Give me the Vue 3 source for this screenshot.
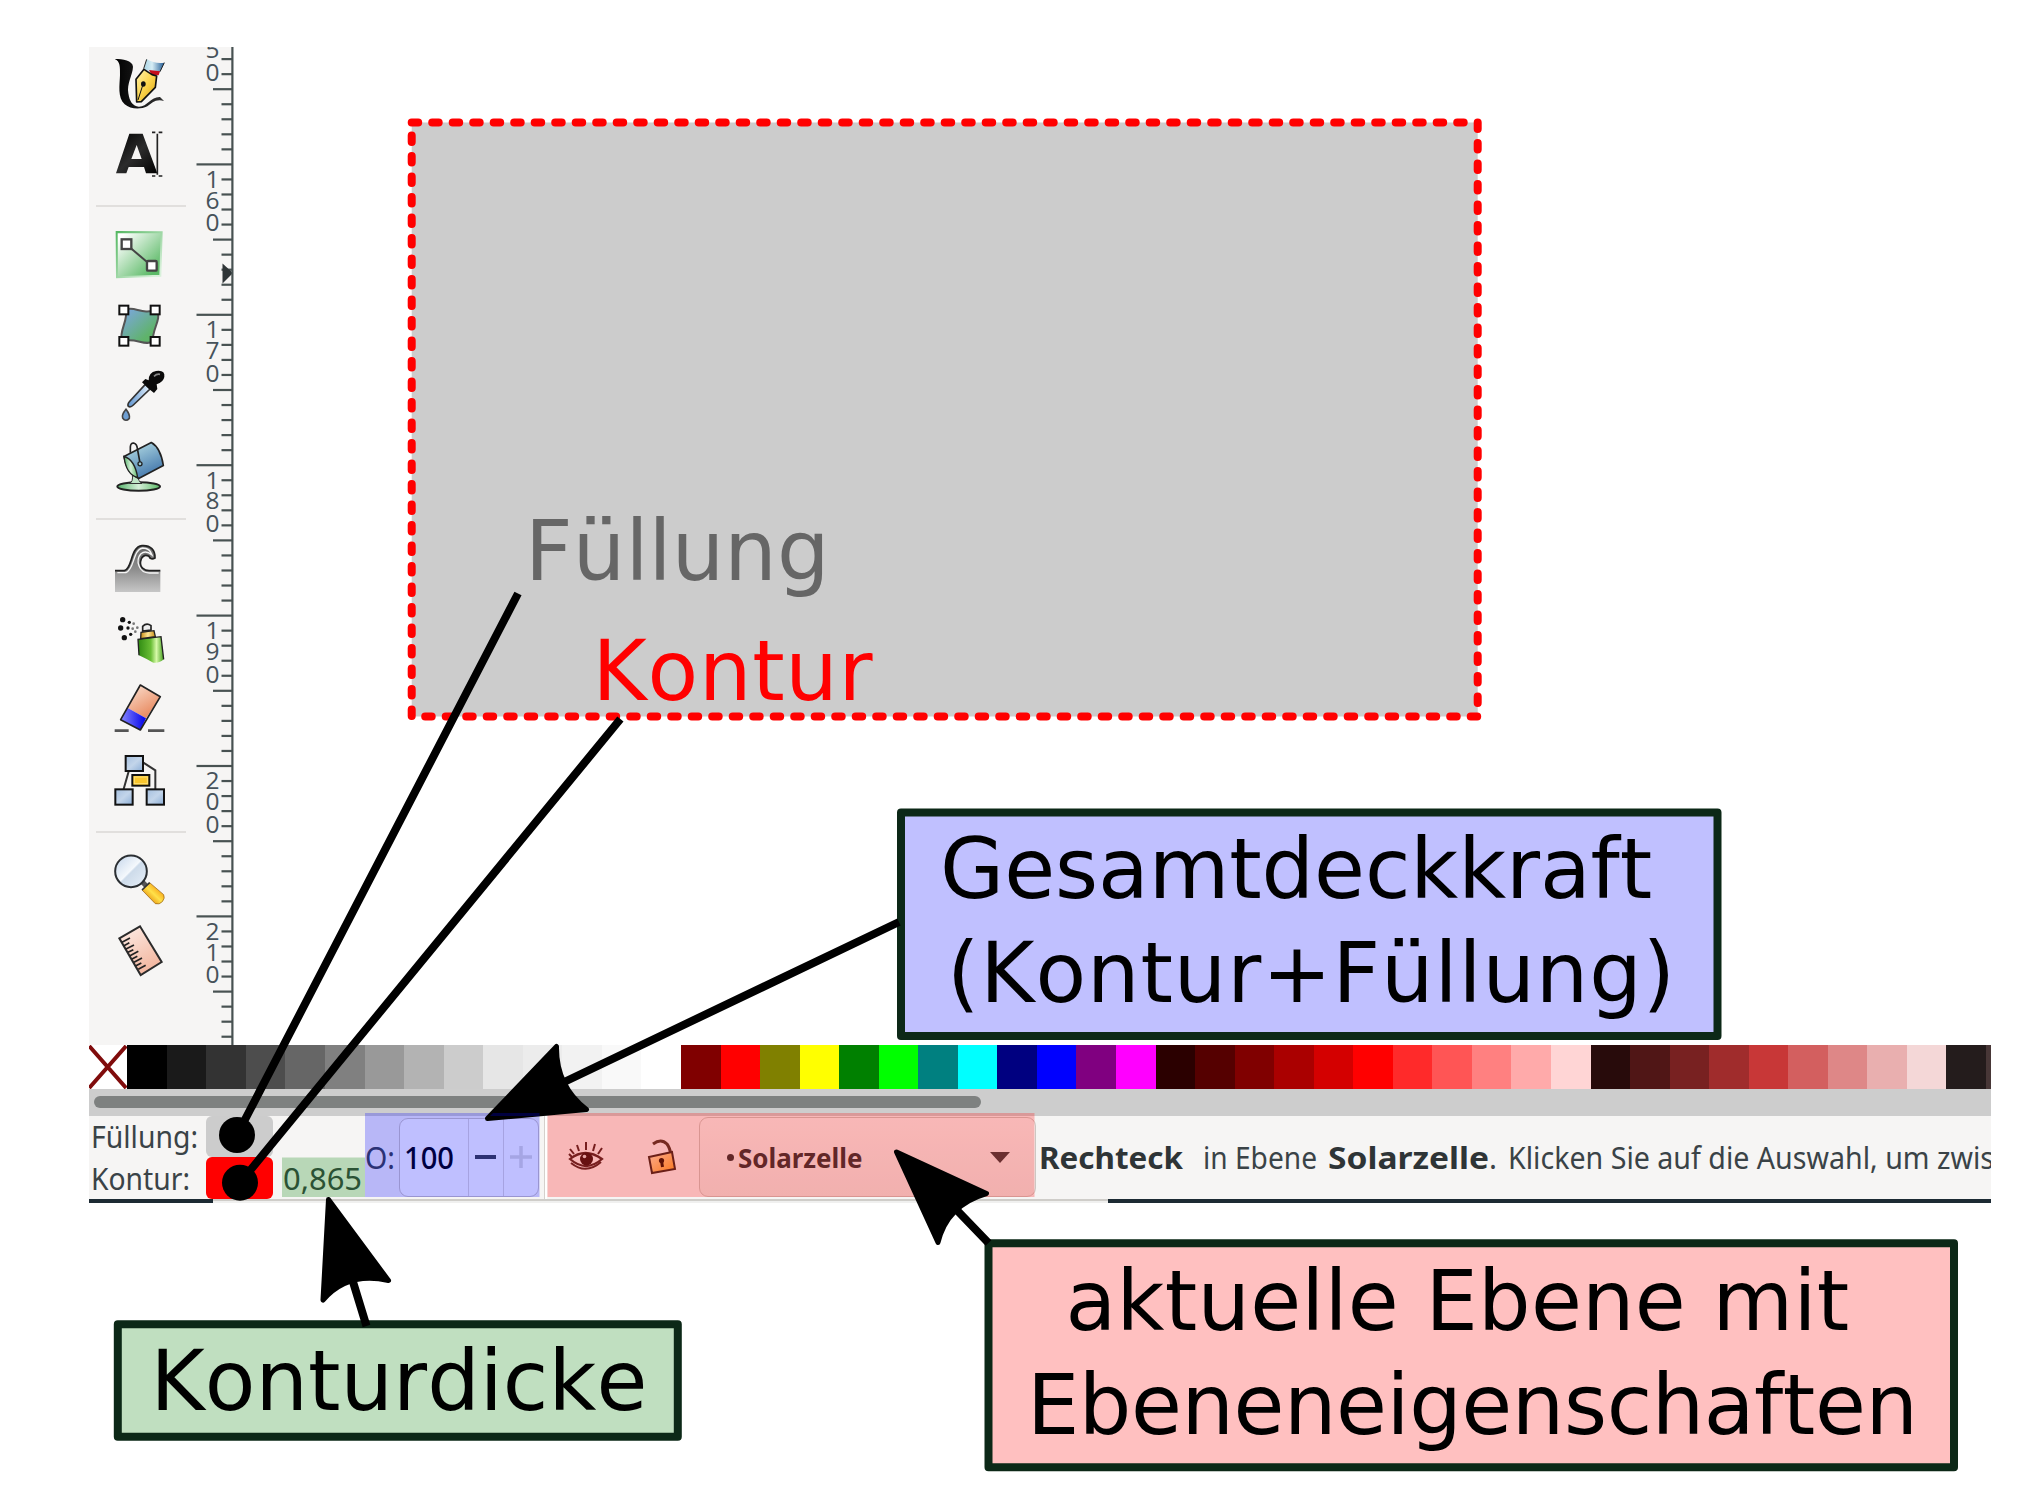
<script setup>
const palette = [
  '#000000', '#1a1a1a', '#333333', '#4d4d4d', '#666666', '#808080', '#999999', '#b3b3b3', '#cccccc', '#e6e6e6',
  '#ececec', '#f2f2f2', '#f9f9f9', '#ffffff', '#800000', '#ff0000', '#808000', '#ffff00', '#008000', '#00ff00',
  '#008080', '#00ffff', '#000080', '#0000ff', '#800080', '#ff00ff', '#2b0000', '#550000', '#800000', '#aa0000',
  '#d40000', '#ff0000', '#ff2a2a', '#ff5555', '#ff8080', '#ffaaaa', '#ffd5d5', '#280b0b', '#501616', '#782121',
  '#a02c2c', '#c83737', '#d35f5f', '#de8787', '#e9afaf', '#f4d7d7', '#241c1c', '#483737',
]

// Vertical ruler: one tick per millimetre, a label every ten
const STEP = 15.04
const ticks = []
for (let i = 3; i < 69; i++) {
  const y = 14 + i * STEP - 47
  if (y < 0 || y > 997) continue
  ticks.push({ y, x: i % 10 === 0 ? 0.5 : i % 5 === 0 ? 17 : 25.5 })
}
const digits = []
for (let n = 0; n < 7; n++) {
  String(150 + n * 10).split('').forEach((d, k) => {
    digits.push({ d, y: 13.6 + n * 10 * STEP - 47 + [23.8, 44.6, 67.3][k] })
  })
}

// Large captions; w is the advance width of the line
const captions = [
  { x: 525, y: 579.5, w: 304.5, color: '#666666', text: 'Füllung' },
  { x: 592.6, y: 699.7, w: 280, color: '#ff0000', text: 'Kontur' },
  { x: 940.1, y: 898.3, w: 712, text: 'Gesamtdeckkraft' },
  { x: 947, y: 1002.3, w: 728, text: '(Kontur+Füllung)' },
  { x: 150.4, y: 1410.2, w: 497, text: 'Konturdicke' },
  { x: 1065.6, y: 1329.5, w: 783.5, text: 'aktuelle Ebene mit' },
  { x: 1026.9, y: 1433.5, w: 891, text: 'Ebeneneigenschaften' },
]

// Stretches a label horizontally to the given width
const vFit = {
  mounted(el, { value }) {
    const w = el.getBoundingClientRect().width
    el.style.transform = `scaleX(${value / w})`
    el.style.marginRight = `${value - w}px`
  },
}
</script>

<template>
  <div class="page">
    <div class="shot">
      <div class="workspace">
        <div class="tools">
          <!-- calligraphy -->
          <svg viewBox="96 48 162 162">
            <defs>
              <linearGradient id="nib" x1="0" y1="0" x2="1" y2="1"><stop offset="0" stop-color="#fff3b0" /><stop offset=".5" stop-color="#fbd44c" /><stop offset="1" stop-color="#d9a010" /></linearGradient>
              <linearGradient id="holder"><stop offset="0" stop-color="#a9d5e6" /><stop offset=".4" stop-color="#d6edf5" /><stop offset="1" stop-color="#1f5a94" /></linearGradient>
              <linearGradient id="ink"><stop offset="0" stop-color="#000" /><stop offset="1" stop-color="#333" /></linearGradient>
            </defs>
            <path d="M104 57C128 57 158 62 159 80C158 105 140 130 145 160C149 186 158 198 176 200C202 201 212 170 240 171L252 183C226 176 216 190 202 199C180 210 150 207 134 193C112 172 119 135 120 105C120 80 121 64 104 57Z" fill="url(#ink)" />
            <path d="M200 58L192 88L214 96L240 96L253 68Q225 72 200 58Z" fill="url(#holder)" /><path d="M200 58L191 86M240 95L253 68" stroke="#222" stroke-width="3" fill="none" />
            <path d="M207 90L240 94L236 106L214 104Z" fill="#c40d1c" />
            <path d="M192 88L216 104L230 108L226 142L184 185L170 186L168 118Z" fill="url(#nib)" stroke="#111" stroke-width="5" stroke-linejoin="round" />
            <path d="M190 130L174 180" stroke="#111" stroke-width="3" /><ellipse cx="190" cy="132" rx="7" ry="8" fill="#111" />
          </svg>
          <!-- text -->
          <svg viewBox="96 262 162 162">
            <defs><linearGradient id="ta" x1="0" y1="0" x2="1" y2="1"><stop offset="0" stop-color="#000" /><stop offset=".5" stop-color="#2c2c2c" /><stop offset="1" stop-color="#000" /></linearGradient></defs>
            <path fill-rule="evenodd" d="M108 401L148 282H188L232 401H198L192 382H146L139 401ZM154 358H185L170 316Z" fill="url(#ta)" />
            <path d="M216 278H226M236 278H247M232 282V405M216 409H226M236 409H247" stroke="#222" stroke-width="5" />
          </svg>
          <div class="rule"></div>
          <!-- gradient -->
          <svg viewBox="96 560 162 162">
            <defs>
              <linearGradient id="gr" x1="0" y1="0" x2="1" y2="1"><stop offset=".1" stop-color="#fff" /><stop offset=".85" stop-color="#5cba67" /></linearGradient>
              <linearGradient id="grb" x1="0" y1="0" x2="1" y2="1"><stop offset="0" stop-color="#55b862" /><stop offset=".9" stop-color="#d8f0da" /></linearGradient>
            </defs>
            <path d="M110 575L245 576L241 706L111 711Z" fill="url(#gr)" stroke="url(#grb)" stroke-width="6" />
            <path d="M142 615L212 674" stroke="#444" stroke-width="6" />
            <rect x="125" y="597" width="29" height="29" fill="#fff" stroke="#444" stroke-width="7" />
            <rect x="201" y="662" width="29" height="29" rx="3" fill="#fff" stroke="#444" stroke-width="7" />
          </svg>
          <!-- mesh -->
          <svg viewBox="96 774 162 162">
            <defs><linearGradient id="me" x1="0" y1="0" x2="1" y2="1"><stop offset=".1" stop-color="#7aa7d8" /><stop offset=".75" stop-color="#5fb36a" /></linearGradient></defs>
            <path d="M137 809C165 797 185 826 231 809C246 840 214 870 219 904C195 920 165 890 125 904C117 870 146 840 137 809Z" fill="url(#me)" stroke="#555" stroke-width="6" />
            <g fill="#fff" stroke="#111" stroke-width="6"><rect x="118" y="797" width="27" height="26" /><rect x="212" y="797" width="27" height="26" /><rect x="118" y="891" width="27" height="26" /><rect x="212" y="891" width="27" height="26" /></g>
          </svg>
          <!-- dropper -->
          <svg viewBox="96 -32 162 162">
            <defs><linearGradient id="dr"><stop offset="0" stop-color="#5d93cf" /><stop offset="1" stop-color="#e3f0fb" /></linearGradient></defs>
            <path d="M196 14L150 64Q141 74 145 80Q152 84 160 76L210 28Z" fill="url(#dr)" stroke="#333" stroke-width="5" />
            <path d="M186 8L196 -2L206 2Q206 -22 228 -26Q256 -30 253 -8Q250 8 230 14L232 28L222 40L210 30Z" fill="#0a0a0a" />
            <path d="M222 -10Q230 -18 240 -16" stroke="#888" stroke-width="5" fill="none" />
            <path d="M138 89Q124 106 128 115Q137 128 148 116Q151 106 138 89Z" fill="#6f9fd2" stroke="#444" stroke-width="5" />
          </svg>
          <!-- bucket -->
          <svg viewBox="96 181.5 162 162">
            <defs>
              <linearGradient id="bu" x1="0" y1="0" x2=".5" y2="1"><stop offset="0" stop-color="#bfe6ea" /><stop offset="1" stop-color="#4579ad" /></linearGradient>
              <linearGradient id="pa"><stop offset="0" stop-color="#56b36b" /><stop offset=".5" stop-color="#d5efd8" /><stop offset="1" stop-color="#5cba67" /></linearGradient>
            </defs>
            <ellipse cx="176" cy="321" rx="64" ry="13" fill="url(#pa)" stroke="#222" stroke-width="6" />
            <path d="M157 285Q160 308 148 312H186Q172 304 175 290Z" fill="#bfe5c6" stroke="#333" stroke-width="3" />
            <path d="M132 231L214 189Q242 205 250 258L176 297Q140 280 132 231Z" fill="url(#bu)" stroke="#222" stroke-width="5" stroke-linejoin="round" />
            <path d="M132 231Q164 240 173 294Q138 285 132 231Z" fill="url(#pa)" stroke="#222" stroke-width="4" />
            <path d="M151 220V202Q152 189 162 191Q171 194 172 207L180 250" fill="none" stroke="#222" stroke-width="5" /><circle cx="180" cy="253" r="6" fill="#9ccad8" stroke="#222" stroke-width="4" />
          </svg>
          <div class="rule"></div>
          <!-- tweak -->
          <svg viewBox="96 479 162 162">
            <defs><linearGradient id="tw" x1="0" y1="0" x2="0" y2="1"><stop offset="0" stop-color="#666" /><stop offset=".5" stop-color="#8c8c8c" /><stop offset="1" stop-color="#c6c6c6" /></linearGradient></defs>
            <path d="M105 571H133C158 565 150 500 186 496C212 494 226 510 225 533Q212 540 207 528Q192 520 184 535C174 562 195 572 210 571H241V635H105Z" fill="url(#tw)" />
            <path d="M105 571H133C158 565 150 500 186 496C212 494 226 510 225 533Q212 540 207 528Q192 520 184 535C174 562 195 572 210 571H241" fill="none" stroke="#222" stroke-width="5" />
            <path d="M112 577H138C164 567 158 508 188 503Q210 503 216 524Q197 508 182 521C166 540 176 578 208 578H236" fill="none" stroke="#f5f5f5" stroke-width="4" />
          </svg>
          <!-- spray -->
          <svg viewBox="96 693 162 162">
            <defs>
              <linearGradient id="sp"><stop offset="0" stop-color="#2f8a12" /><stop offset=".5" stop-color="#68bd34" /><stop offset=".72" stop-color="#d6f9a8" /><stop offset="1" stop-color="#439f1c" /></linearGradient>
              <linearGradient id="spc"><stop offset="0" stop-color="#c48a12" /><stop offset=".5" stop-color="#ffe695" /><stop offset="1" stop-color="#c48a12" /></linearGradient>
            </defs>
            <g fill="#111"><circle cx="128" cy="719" r="8" /><circle cx="122" cy="744" r="8" /><circle cx="133" cy="773" r="8" /><circle cx="148" cy="727" r="5" /><circle cx="144" cy="744" r="5" /><circle cx="152" cy="763" r="5" /></g>
            <g fill="#777"><circle cx="161" cy="731" r="4" /><circle cx="158" cy="746" r="4" /><circle cx="166" cy="755" r="4" /><circle cx="172" cy="743" r="4" /></g>
            <path d="M174 778L243 770L251 838Q240 850 220 848Q196 835 177 826Z" fill="url(#sp)" /><path d="M177 826L174 778L243 770L251 838" fill="none" stroke="#222" stroke-width="4" />
            <path d="M183 757L222 752L226 770L182 776Z" fill="url(#spc)" stroke="#222" stroke-width="4" />
            <path d="M188 753V739Q200 727 213 737V750Z" fill="#eee" stroke="#222" stroke-width="5" />
          </svg>
          <!-- eraser -->
          <svg viewBox="96 907 162 162">
            <defs><linearGradient id="er" x1="0" y1="0" x2=".6" y2="1"><stop offset="0" stop-color="#fbe3d4" /><stop offset="1" stop-color="#e8875c" /></linearGradient><linearGradient id="eb"><stop offset="0" stop-color="#8a8aff" /><stop offset="1" stop-color="#0000e8" /></linearGradient></defs>
            <path d="M181 916L241 951L198 1016L142 984Z" fill="url(#er)" /><path d="M142 984L198 1016L181 1051L122 1020Z" fill="url(#eb)" />
            <path d="M181 916L241 951L181 1051L122 1020Z" fill="none" stroke="#222" stroke-width="5" stroke-linejoin="round" />
            <path d="M104 1053H146M204 1053H253" stroke="#555" stroke-width="8" />
          </svg>
          <!-- connector -->
          <svg viewBox="96 101 162 162">
            <defs><linearGradient id="cb" x1="0" y1="0" x2="1" y2="1"><stop offset="0" stop-color="#a4bfdf" /><stop offset=".5" stop-color="#c3d5ea" /><stop offset="1" stop-color="#8caed6" /></linearGradient></defs>
            <path d="M147 150L131 206M189 126L226 150V206" fill="none" stroke="#333" stroke-width="6" />
            <g fill="url(#cb)" stroke="#111" stroke-width="6"><rect x="137" y="107" width="52" height="45" /><rect x="106" y="207" width="52" height="46" /><rect x="200" y="207" width="52" height="46" /></g>
            <rect x="157" y="164" width="51" height="32" fill="#f9c62d" stroke="#111" stroke-width="6" /><rect x="163" y="170" width="39" height="20" fill="none" stroke="#ffe27a" stroke-width="3" />
          </svg>
          <div class="rule"></div>
          <!-- zoom -->
          <svg viewBox="96 399 162 162">
            <defs><linearGradient id="gl" x1="0" y1="0" x2="1" y2="1"><stop offset="0" stop-color="#c3d5ea" /><stop offset=".48" stop-color="#f4f8fc" /><stop offset=".52" stop-color="#cddbea" /><stop offset="1" stop-color="#e8f0f8" /></linearGradient><linearGradient id="ha" x1="1" y1="0" x2="0" y2="1"><stop offset=".2" stop-color="#f59a0c" /><stop offset=".5" stop-color="#ffe14a" /><stop offset=".8" stop-color="#e58a08" /></linearGradient></defs>
            <path d="M188 487L202 501" stroke="#555" stroke-width="15" />
            <path d="M186 510L209 488L251 524Q256 534 247 545Q238 555 226 551Z" fill="url(#ha)" stroke="#8f5a0a" stroke-width="2" />
            <path d="M186 510L209 488" stroke="#333" stroke-width="5" />
            <circle cx="153" cy="454" r="47.500" fill="url(#gl)" stroke="#2b2f33" stroke-width="6" />
          </svg>
          <!-- measure -->
          <svg viewBox="96 613 162 162">
            <defs><linearGradient id="ru" x1="0" y1="0" x2=".5" y2="1"><stop offset="0" stop-color="#fdeee8" /><stop offset="1" stop-color="#f3b7a0" /></linearGradient></defs>
            <path d="M118 656L180 620L245 727L182 766Z" fill="url(#ru)" stroke="#2b2b2b" stroke-width="6" />
            <path d="M126 668L150 655M132 678L148 669M138 688L162 676M144 698L160 690M150 708L175 695M156 718L172 710M162 728L186 715M168 738L184 730M175 749L197 737" stroke="#222" stroke-width="5" />
          </svg>
        </div>
        <svg class="ruler" width="38" height="998" viewBox="0 0 38 998">
          <rect v-for="t in ticks" :key="t.y" :x="t.x" :y="t.y - 1.1" :width="36.500 - t.x" height="2.200" fill="#485252" />
          <text v-for="(g, i) in digits" :key="i" :y="g.y" x="16.500" text-anchor="middle">{{ g.d }}</text>
          <path d="M26.500 216.500L37 226L26.500 236.500Z" fill="#2e3436" />
          <rect x="35.300" y="0" width="2.200" height="998" fill="#485252" />
        </svg>
        <div class="canvas"></div>
      </div>

      <div class="palette">
        <svg class="none" width="38" height="44" viewBox="0 0 38 44"><path d="M0 1L37 43M37 1L0 43" stroke="#800c0c" stroke-width="4" /></svg>
        <div v-for="(c, i) in palette" :key="i" class="swatch" :style="{ background: c }"></div>
      </div>
      <div class="scroll"><div class="thumb"></div></div>

      <div class="status">
        <div class="labels">
          <div class="row"><span v-fit="107">Füllung:</span></div>
          <div class="row"><span v-fit="99">Kontur:</span></div>
        </div>
        <div class="paints"><div class="paint fill"></div><div class="paint stroke"></div></div>
        <div class="width"><div class="row"></div><div class="row"><span v-fit="79">0,865</span></div></div>
        <div class="olabel"><span v-fit="30">O:</span></div>
        <div class="spin">
          <div class="value"><span v-fit="50">100</span></div>
          <div class="btn"><i class="minus"></i></div>
          <div class="btn"><svg width="22" height="22" viewBox="0 0 22 22"><path d="M0 11H22M11 0V22" stroke="#dddddb" stroke-width="3.500" /></svg></div>
        </div>
        <div class="divider"></div>
        <div class="toggles">
          <svg width="36" height="32" viewBox="0 0 36 32">
            <path d="M2 18Q17 6 34 18Q18 32 2 18Z" fill="#f6f5f4" stroke="#4a2a2a" stroke-width="2.200" /><circle cx="18.500" cy="18" r="6.500" fill="#351717" /><circle cx="16.500" cy="15.500" r="1.800" fill="#ddd" />
            <path d="M2 8L6 13M9 4L11 10M18 1V9M27 3L25 10M34 7L30 13M1 13L4 16M3 22Q18 34 33 21" fill="none" stroke="#4a2a2a" stroke-width="2" />
          </svg>
          <svg width="30" height="36" viewBox="0 0 30 36">
            <defs><linearGradient id="lk" x1="0" y1="0" x2="1" y2="1"><stop offset="0" stop-color="#fbe5c0" /><stop offset="1" stop-color="#f7a028" /></linearGradient></defs>
            <path d="M6 5Q14 -1 20 5Q23 9 24 16" fill="none" stroke="#4a382c" stroke-width="3" /><path d="M2 18L25 13L28 30L5 34Z" fill="url(#lk)" stroke="#3a2a20" stroke-width="2" />
            <circle cx="14.500" cy="21.500" r="2.600" fill="#2a1808" /><path d="M14.500 22L15.500 28" stroke="#2a1808" stroke-width="3" />
          </svg>
        </div>
        <div class="combo">
          <i class="bullet"></i><span v-fit="124.500">Solarzelle</span>
          <svg width="20" height="11" viewBox="0 0 20 11"><path d="M0 0H20L10 11Z" fill="#3a3f40" /></svg>
        </div>
        <div class="message">
          <b v-fit="144">Rechteck</b><span v-fit="114" class="layer">in Ebene</span><b v-fit="161" class="name">Solarzelle</b><span v-fit="8" class="dot">.</span><span v-fit="486" class="hint">Klicken Sie auf die Auswahl, um zwis</span>
        </div>
      </div>
      <div class="edge"><div class="dark first"></div><div class="light"></div><div class="dark last"></div></div>
    </div>

    <svg class="notes" width="2039" height="1495" viewBox="0 0 2039 1495">
      <rect x="411.700" y="122.500" width="1066" height="594" fill="#cccccc" stroke="#ff0000" stroke-width="8" stroke-linecap="round" stroke-dasharray="6.500 14" />
      <rect x="282" y="1157.500" width="83" height="39.500" fill="#008000" fill-opacity=".25" />
      <rect x="365" y="1113" width="174.500" height="84" fill="#0000ff" fill-opacity=".25" />
      <rect x="547.500" y="1113" width="487" height="84" fill="#ff0000" fill-opacity=".25" />

      <g stroke="#000" stroke-width="8">
        <path d="M518 593.500L237 1135M620.400 719L240 1182.700" />
      </g>
      <circle cx="237" cy="1135" r="18" /><circle cx="240" cy="1182.700" r="18" />

      <g stroke="#0c2817" stroke-width="8" stroke-linejoin="round">
        <rect x="901" y="812.500" width="816.500" height="223.500" fill="#c0c0ff" />
        <rect x="117.800" y="1324.200" width="560" height="112.500" fill="#c0dfc0" />
        <rect x="988.500" y="1243.200" width="965.500" height="224" fill="#ffc0c0" />
      </g>

      <g stroke="#000" stroke-width="8"><path d="M899 922L560 1084M988.500 1243L950 1203M366.500 1326L350 1272" /></g>
      <g stroke="#000" stroke-width="5" stroke-linejoin="round">
        <path d="M487.500 1118.500L556.500 1046.500Q556 1086 586.500 1109.500Z" />
        <path d="M896.500 1152L986.500 1193.500Q947 1205 938 1242.500Z" />
        <path d="M328.500 1199.500L388.500 1280.500Q348 1271 323 1300Z" />
      </g>
      <path d="M493 1113H539.500V1116H490Z" fill="#00003f" />

      <g class="big">
        <text v-for="c in captions" :key="c.text" :x="c.x" :y="c.y" :textLength="c.w" :fill="c.color || '#000000'">{{ c.text }}</text>
      </g>
    </svg>
  </div>
</template>

<style>
body { margin: 0; background: #fff; }
</style>

<style scoped>
.page { position: relative; width: 2039px; height: 1495px; overflow: hidden; background: #fff; box-sizing: border-box; padding: 47px 0 0 89px; }
.shot { width: 1902px; font-family: "Noto Sans", "Open Sans", sans-serif; color: #3a4347; }
.workspace { display: flex; height: 997.5px; }
.tools { width: 107px; background: #f6f5f4; box-sizing: border-box; padding: 9px 0 0 23px; display: flex; flex-direction: column; gap: 17.3px; }
.tools svg { width: 54px; height: 54px; flex: none; }
.rule { height: 10.7px; flex: none; margin-left: -16px; width: 90px; background: linear-gradient(#e1dfdd, #e1dfdd) 0 6px / 100% 2px no-repeat; }
.ruler { flex: none; background: linear-gradient(90deg, #f6f5f4 37px, #fff 37px); fill: #46525a; display: block; }
.ruler text { font-family: "Open Sans", "Noto Sans", sans-serif; font-size: 24.500px; font-weight: 400; }
.canvas { flex: 1; background: #fff; }
.palette { display: flex; height: 44px; overflow: hidden; }
.none { flex: none; width: 38.3px; background: #fff; }
.swatch { flex: none; width: 39.55px; }
.scroll { height: 27px; background: #cdcdcd; display: flex; align-items: center; padding-left: 4.5px; }
.thumb { width: 887px; height: 12.5px; border-radius: 7px; background: #7e8180; }
.status { height: 83.5px; display: flex; background: #f6f5f4; font-size: 30px; line-height: 41px; white-space: pre; overflow: hidden; }
.status span, .status b { display: inline-block; transform-origin: 0 50%; flex: none; }
.status b { color: #2e3436; }
.labels { width: 117px; padding-left: 2px; box-sizing: border-box; flex: none; }
.row { height: 41.7px; display: flex; align-items: center; }
.paints { width: 67px; flex: none; display: flex; flex-direction: column; }
.paint { height: 41.7px; border-radius: 6px; }
.fill { background: #cccccc; }
.stroke { background: #ff0000; }
.width { width: 92px; padding-left: 9.5px; box-sizing: border-box; flex: none; }
.olabel { width: 33.5px; flex: none; display: flex; align-items: center; }
.spin { width: 140.5px; height: 79px; margin-top: 2px; flex: none; display: flex; box-sizing: border-box; border: 1.5px solid #cdc7c2; border-radius: 9px; background: #fff; }
.value { width: 68px; box-sizing: border-box; padding-left: 4px; display: flex; align-items: center; color: #000; font-weight: 500; }
.btn { flex: 1; border-left: 1px solid #dedad7; display: flex; align-items: center; justify-content: center; }
.minus { width: 21px; height: 4px; background: #3d4244; }
.divider { width: 9px; flex: none; background: linear-gradient(90deg, transparent 5px, #d5d0cc 5px 6px, #fff 6px 8px, transparent 8px); }
.toggles { width: 150.5px; flex: none; display: flex; align-items: center; gap: 43px; padding-left: 19.5px; box-sizing: border-box; }
.combo { width: 337px; height: 80px; margin-top: 1.5px; flex: none; box-sizing: border-box; border: 1.5px solid #cdc7c2; border-radius: 9px; background: linear-gradient(#f6f5f4, #edebe9); display: flex; align-items: center; padding: 0 25px 0 27.5px; font-size: 27.5px; font-weight: 700; color: #2e3436; }
.combo svg { margin-left: auto; }
.bullet { width: 7px; height: 7px; border-radius: 50%; background: #2e3436; margin-right: 4px; }
.message { flex: 1; min-width: 0; display: flex; align-items: center; padding-left: 3.5px; overflow: hidden; }
.layer { margin-left: 20px; }
.name { margin-left: 11px; }
.hint { margin-left: 11px; }
.edge { display: flex; height: 4px; }
.dark { background: #1c2a33; }
.first { width: 123.5px; }
.light { width: 895.5px; background: linear-gradient(#cfcdc9 2px, #f0f0ef 2px); }
.last { flex: 1; }
.notes { position: absolute; left: 0; top: 0; }
.big { font-family: "DejaVu Sans", sans-serif; font-size: 82.8px; font-kerning: none; }
</style>
